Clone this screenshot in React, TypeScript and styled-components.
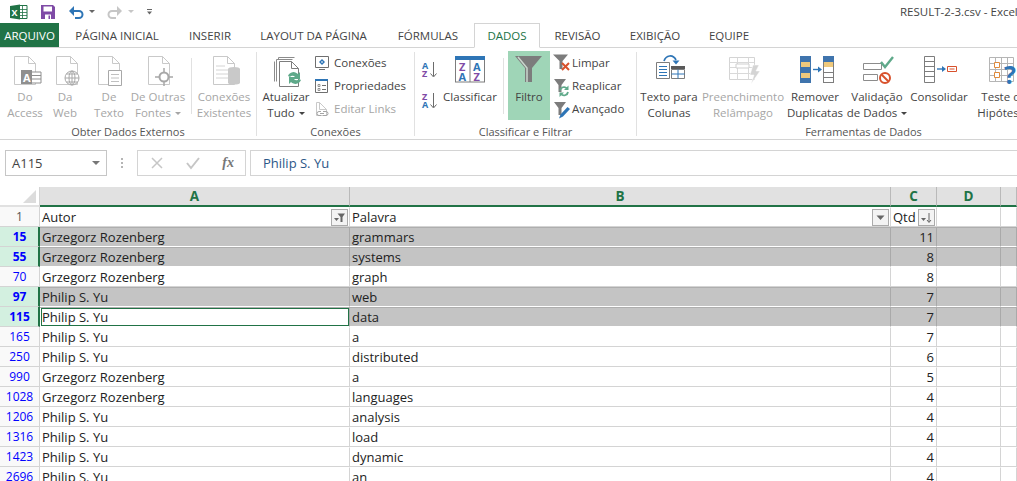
import { ReactNode } from "react";
import styled, { createGlobalStyle } from "styled-components";

const GlobalStyle = createGlobalStyle`
  html, body {
    margin: 0;
    padding: 0;
    background: #fff;
  }
  body {
    font-family: "Open Sans", "Noto Sans", sans-serif;
    color: #444;
  }
`;

const docPath = (x: number, y: number, w: number, h: number) =>
  `M${x + 0.5} ${y + 0.5}h${w - 7}l7 7v${h - 7}h-${w}zM${x + w - 6.5} ${y + 0.5}v7h7`;

const IconSvg = styled.svg`
  overflow: visible;
`;

const Svg = ({ w, h, children }: { w: number; h: number; children: ReactNode }) => (
  <IconSvg width={w} height={h} viewBox={`0 0 ${w} ${h}`} fill="none">
    {children}
  </IconSvg>
);

const AccessIcon = () => (
  <Svg w={40} h={38}>
    <path d={docPath(9, 5, 21, 28)} stroke="#c9c9c9" fill="#fff" />
    <rect x="16" y="19" width="11" height="14" fill="#8f8f8f" />
    <text x="18" y="31" fontSize="11" fontWeight="700" fill="#fff" fontFamily="Open Sans">A</text>
    <path d="M27 21h9v11h-9" fill="#fff" stroke="#8f8f8f" />
    <path d="M27 24.5h9M27 28h9" stroke="#8f8f8f" />
  </Svg>
);

const WebIcon = () => (
  <Svg w={40} h={38}>
    <path d={docPath(11, 5, 21, 28)} stroke="#c9c9c9" fill="#fff" />
    <circle cx="27" cy="27" r="7" fill="#fff" stroke="#a8a8a8" />
    <path d="M20 27h14M27 20v14M21.5 23h11M21.5 31h11" stroke="#a8a8a8" />
    <ellipse cx="27" cy="27" rx="3" ry="7" stroke="#a8a8a8" />
  </Svg>
);

const TextIcon = () => (
  <Svg w={48} h={38}>
    <path d={docPath(13, 5, 21, 28)} stroke="#c9c9c9" fill="#fff" />
    <path d="M23.5 19.5h13v15h-13z" fill="#fff" stroke="#a8a8a8" />
    <path d="M26 23.5h8M26 27h8M26 30.5h8" stroke="#c0c0c0" />
  </Svg>
);

const OtherIcon = () => (
  <Svg w={50} h={38}>
    <path d={docPath(15, 5, 21, 28)} stroke="#c9c9c9" fill="#fff" />
    <circle cx="31" cy="26" r="4.5" fill="#fff" stroke="#a8a8a8" strokeWidth="2" />
    <path d="M31 17v5M31 30v5M22 26h5M35 26h5" stroke="#a8a8a8" strokeWidth="1.5" />
  </Svg>
);

const ExistingIcon = () => (
  <Svg w={62} h={38}>
    <path d={docPath(20, 5, 21, 28)} stroke="#c9c9c9" fill="#fff" />
    <path d="M23 15h9M23 19h14M23 23h14M23 27h14" stroke="#d4d4d4" />
    <ellipse cx="41" cy="18" rx="6" ry="2" fill="#c9c9c9" />
    <path d="M35 18v14c1 2 11 2 12 0V18z" fill="#c9c9c9" />
  </Svg>
);

const RefreshIcon = () => (
  <Svg w={46} h={38}>
    <path d="M15.5 6.5h16M13.5 8.5h16M11.5 10.5v20M13.5 8.5v22M15.500 6.5v2" stroke="#8c8c8c" />
    <path d={docPath(16, 10, 19, 25)} stroke="#7d7d7d" fill="#fff" />
    <path d="M25 25a6 6 0 0 1 10-2l2-2v7h-7l2-2a3 3 0 0 0-5 0z" fill="#5fa98a" />
    <path d="M38 29a6 6 0 0 1-10 2l-2 2v-7h7l-2 2a3 3 0 0 0 5 0z" fill="#5fa98a" />
  </Svg>
);

const ConnIcon = () => (
  <Svg w={16} h={16}>
    <path d="M1.5 1.5h13v11h-13z" stroke="#6f6f6f" fill="#fff" />
    <path d="M5 14.5h6" stroke="#6f6f6f" />
    <path d="M8 4l3 3-3 3-3-3z" fill="#2e75b6" />
    <path d="M8 6l1 1-1 1-1-1z" fill="#fff" />
  </Svg>
);

const PropsIcon = () => (
  <Svg w={16} h={16}>
    <path d="M1.5 1.5h12v13h-12z" stroke="#6f6f6f" fill="#fff" />
    <path d="M1 1h13v2H1z" fill="#2e75b6" />
    <path d="M4 6.5h2v2H4zM4 10.5h2v2H4z" stroke="#6f6f6f" strokeWidth=".7" />
    <path d="M8 7.5h4M8 11.5h4" stroke="#6f6f6f" />
  </Svg>
);

const LinksIcon = () => (
  <Svg w={16} h={16}>
    <path d={docPath(2, 1, 10, 13)} stroke="#c9c9c9" fill="#fff" />
    <path d="M6 12.5h4M9 10.5h3a2 2 0 0 1 0 4H9M7 10.5H5a2 2 0 0 0 0 4h2" stroke="#a5a5a5" />
  </Svg>
);

const SortIcon = ({ top, bottom }: { top: string; bottom: string }) => (
  <Svg w={18} h={18}>
    <text x="0" y="8" fontSize="9" fontWeight="700" fill={top === "A" ? "#2e75b6" : "#7f4ba6"} fontFamily="Open Sans">{top}</text>
    <text x="0" y="16" fontSize="9" fontWeight="700" fill={bottom === "A" ? "#2e75b6" : "#7f4ba6"} fontFamily="Open Sans">{bottom}</text>
    <path d="M11.5 1v14M8.500 12.500l3 3.500 3-3.500" stroke="#6b6b6b" />
  </Svg>
);

const SortDialogIcon = () => (
  <Svg w={60} h={38}>
    <rect x="15.500" y="6" width="29" height="25" fill="#fff" stroke="#7d7d7d" />
    <rect x="15" y="5" width="30" height="4" fill="#2e75b6" />
    <path d="M30 9v22" stroke="#7d7d7d" />
    <text x="19" y="19.500" fontSize="11" fontWeight="700" fill="#7f4ba6" fontFamily="Open Sans">Z</text>
    <text x="18.500" y="30" fontSize="11" fontWeight="700" fill="#2e75b6" fontFamily="Open Sans">A</text>
    <text x="33" y="19.500" fontSize="11" fontWeight="700" fill="#2e75b6" fontFamily="Open Sans">A</text>
    <text x="33.500" y="30" fontSize="11" fontWeight="700" fill="#7f4ba6" fontFamily="Open Sans">Z</text>
  </Svg>
);

const FunnelIcon = () => (
  <Svg w={42} h={38}>
    <path d="M7 5h27L24 17v14h-7V17z" fill="#7c7c7c" />
    <path d="M10 6l9 11v14" stroke="#c9d6cd" strokeWidth="1.500" />
  </Svg>
);

const MiniFunnel = ({ small, children }: { small?: boolean; children: ReactNode }) => (
  <Svg w={18} h={20}>
    <path d={small ? "M1 3h12L8.500 9v7h-3V9z" : "M0 1.500h15L9.500 8v8h-3V8z"} fill="#7c7c7c" />
    {children}
  </Svg>
);

const TextColumnsIcon = () => (
  <Svg w={64} h={38}>
    <path d="M19.500 11.500h13v16h-13z" fill="#fff" stroke="#7d7d7d" />
    <path d="M22 15.500h8M22 18.500h8M22 21.500h8M22 24.500h8" stroke="#2e75b6" />
    <path d="M34.500 18.500h13v9h-13z" fill="#fff" stroke="#7d7d7d" />
    <path d="M34 15h14v3H34z" fill="#595959" />
    <path d="M41 18.500v9M34.500 23h13" stroke="#2e75b6" />
    <path d="M27 10c2-6 9-7 12-1" stroke="#2e75b6" strokeWidth="1.700" />
    <path d="M35.500 9.500h7l-3.500 4z" fill="#2e75b6" />
  </Svg>
);

const FlashFillIcon = () => (
  <Svg w={84} h={38}>
    <path d="M28.500 6.500h25v22h-25z" fill="#fff" stroke="#d4d4d4" />
    <path d="M28.500 11.500h25M28.500 16.500h25M28.500 22.500h25M36.500 6.500v22M47.500 6.500v22" stroke="#d9d9d9" />
    <path d="M35 13h13v4H35z" fill="#fff" stroke="#cfcfcf" />
    <path d="M52 14h6l-3 6h4l-9 13 3-9h-4z" fill="#d4d4d4" stroke="#fff" strokeWidth=".5" />
  </Svg>
);

const RemoveDupIcon = () => (
  <Svg w={60} h={38}>
    <rect x="15" y="5" width="11" height="27" fill="#3f74ad" />
    <rect x="16" y="11" width="9" height="5" fill="#efc97c" />
    <rect x="16" y="22" width="9" height="5" fill="#efc97c" />
    <path d="M28 18.500h7" stroke="#2e75b6" strokeWidth="1.400" />
    <path d="M33 15.500l4 3-4 3z" fill="#2e75b6" />
    <rect x="38.500" y="5.500" width="10" height="26" fill="#fff" stroke="#7d7d7d" />
    <rect x="38" y="5" width="11" height="6" fill="#3f74ad" />
    <rect x="39" y="11" width="9" height="5" fill="#efc97c" />
    <path d="M38.500 21.500h10M38.500 26.500h10" stroke="#7d7d7d" />
  </Svg>
);

const ValidationIcon = () => (
  <Svg w={64} h={38}>
    <path d="M18.500 12.500h18v6h-18zM18.500 23.500h14v6h-14z" fill="#fff" stroke="#8c8c8c" />
    <path d="M36 11l4 5 8-10" stroke="#5fa98a" strokeWidth="2.400" />
    <circle cx="40" cy="27" r="5" fill="#fff" stroke="#d8512c" strokeWidth="2" />
    <path d="M36.500 23.500l7 7" stroke="#d8512c" strokeWidth="2" />
  </Svg>
);

const ConsolidateIcon = () => (
  <Svg w={60} h={38}>
    <path d="M15.500 5.500h10v26h-10zM15.500 10.500h10M15.500 15.500h10M15.500 20.500h10M15.500 25.500h10" fill="#fff" stroke="#7d7d7d" />
    <path d="M28 18h7" stroke="#2e75b6" strokeWidth="1.400" />
    <path d="M33 15l4 3-4 3z" fill="#2e75b6" />
    <path d="M38.500 15.500h9v5h-9z" fill="#fff" stroke="#d8512c" />
    <path d="M40.500 18h5" stroke="#d8512c" />
  </Svg>
);

const WhatIfIcon = () => (
  <Svg w={70} h={38}>
    <path d="M20.500 6.500h24v24h-24zM20.500 12.500h24M20.500 18.500h24M20.500 24.500h24M26.500 6.500v24M32.500 6.500v24M38.500 6.500v24" fill="#fff" stroke="#b5b5b5" />
    <path d="M25.500 11.500h5v5h-5zM25.500 21.500h5v5h-5z" fill="#fff" stroke="#e08a3c" />
    <text x="35" y="33" fontSize="25" fontWeight="700" fill="#2e75b6" fontFamily="Open Sans">?</text>
  </Svg>
);

const Page = styled.div`
  width: 1017px;
  height: 481px;
  overflow: hidden;
  background: #fff;
`;

const TitleBar = styled.div`
  height: 23px;
  display: flex;
  align-items: center;
`;

const QuickAccess = styled.div`
  display: flex;
  align-items: center;
  gap: 12px;
  padding-left: 10px;
`;

const QuickCaret = styled.span<{ $muted?: boolean }>`
  width: 0;
  height: 0;
  margin-left: -7px;
  border-left: 3px solid transparent;
  border-right: 3px solid transparent;
  border-top: 3px solid ${(p) => (p.$muted ? "#c6c6c6" : "#666")};
`;

const WindowTitle = styled.div`
  margin-left: auto;
  width: 117px;
  overflow: hidden;
  white-space: nowrap;
  font-size: 11.5px;
  color: #444;
`;

const TabBar = styled.div`
  height: 24px;
  display: flex;
  border-bottom: 1px solid #d4d4d4;
`;

const Tab = styled.div<{ $w: number; $active?: boolean; $file?: boolean }>`
  width: ${(p) => p.$w}px;
  height: ${(p) => (p.$active ? 25 : 24)}px;
  box-sizing: border-box;
  display: flex;
  align-items: center;
  justify-content: center;
  white-space: nowrap;
  font-size: 11.5px;
  color: ${(p) => (p.$file ? "#fff" : p.$active ? "#217346" : "#444")};
  background: ${(p) => (p.$file ? "#217346" : "#fff")};
  border: ${(p) => (p.$active ? "1px solid #d4d4d4" : "none")};
  border-bottom: ${(p) => (p.$active ? "1px solid #fff" : "none")};
`;

const Ribbon = styled.div`
  height: 92px;
  display: flex;
  box-sizing: border-box;
  overflow: hidden;
  border-bottom: 1px solid #d4d4d4;
`;

const Group = styled.div<{ $w: number }>`
  width: ${(p) => p.$w}px;
  flex-shrink: 0;
  margin: 4px 0 3px;
  display: flex;
  flex-direction: column;
  box-sizing: border-box;
  border-right: 1px solid #e1e1e1;
`;

const GroupBody = styled.div`
  display: flex;
  height: 69px;
  margin-top: -1px;
`;

const GroupCaption = styled.div`
  text-align: center;
  font-size: 11px;
  line-height: 16px;
  margin-top: 4px;
  color: #555;
  white-space: nowrap;
`;

const RibbonBtn = styled.div<{ $w: number; $off?: boolean; $on?: boolean }>`
  width: ${(p) => p.$w}px;
  flex-shrink: 0;
  display: flex;
  flex-direction: column;
  align-items: center;
  background: ${(p) => (p.$on ? "#9fd5b7" : "transparent")};
  color: ${(p) => (p.$off ? "#a6a6a6" : "#444")};
`;

const Spacer = styled.div<{ $w: number }>`
  width: ${(p) => p.$w}px;
  flex-shrink: 0;
`;

const IconSlot = styled.div`
  height: 38px;
  svg {
    display: block;
  }
`;

const BtnLabel = styled.div`
  font-size: 11.5px;
  line-height: 16px;
  text-align: center;
  white-space: nowrap;
`;

const Caret = styled.span`
  display: inline-block;
  margin-left: 4px;
  vertical-align: 2px;
  width: 0;
  height: 0;
  border-left: 3px solid transparent;
  border-right: 3px solid transparent;
  border-top: 3px solid currentColor;
`;

const VSep = styled.div`
  width: 1px;
  height: 56px;
  margin: 7px 0 0;
  flex-shrink: 0;
  background: #e1e1e1;
`;

const SmallCol = styled.div<{ $left: number; $w: number }>`
  margin-left: ${(p) => p.$left}px;
  width: ${(p) => p.$w}px;
  flex-shrink: 0;
  display: flex;
  flex-direction: column;
`;

const SmallBtn = styled.div<{ $off?: boolean; $gap?: number }>`
  height: 23px;
  display: flex;
  align-items: center;
  gap: ${(p) => p.$gap ?? 3}px;
  font-size: 11.5px;
  white-space: nowrap;
  color: ${(p) => (p.$off ? "#a6a6a6" : "#444")};
  svg {
    display: block;
    flex-shrink: 0;
  }
`;

const SortCol = styled.div`
  width: 18px;
  margin-left: 7px;
  flex-shrink: 0;
  padding-top: 10px;
  display: flex;
  flex-direction: column;
  gap: 13px;
  svg {
    display: block;
  }
`;

const FormulaBar = styled.div`
  height: 26px;
  margin: 10px 0 11px;
  display: flex;
  align-items: stretch;
`;

const NameBox = styled.div`
  width: 102px;
  margin-left: 5px;
  box-sizing: border-box;
  padding: 0 6px;
  border: 1px solid #c6c6c6;
  display: flex;
  align-items: center;
  justify-content: space-between;
  font-size: 13px;
  color: #444;
`;

const NameArrow = styled.span`
  width: 0;
  height: 0;
  border-left: 4px solid transparent;
  border-right: 4px solid transparent;
  border-top: 4px solid #777;
`;

const Dots = styled.div`
  width: 30px;
  display: flex;
  flex-direction: column;
  align-items: center;
  justify-content: center;
  gap: 2px;
  span {
    width: 2px;
    height: 2px;
    background: #b5b5b5;
  }
`;

const FxBox = styled.div`
  width: 109px;
  box-sizing: border-box;
  border: 1px solid #d4d4d4;
  display: flex;
  align-items: center;
  justify-content: space-between;
  padding: 0 11px 0 12px;
`;

const FxLabel = styled.span`
  font-family: "Liberation Serif", serif;
  font-style: italic;
  font-weight: 700;
  font-size: 14px;
  color: #777;
`;

const FormulaInput = styled.div`
  flex: 1;
  margin-left: 4px;
  box-sizing: border-box;
  padding-left: 12px;
  border: 1px solid #d4d4d4;
  border-right: none;
  display: flex;
  align-items: center;
  font-size: 13px;
  color: #2b5788;
`;

const Sheet = styled.div`
  display: grid;
  grid-template-columns: 40px 310px 541px 46px 64px 16px;
  grid-auto-rows: 20px;
  font-size: 13px;
  color: #222;
`;

const HeadRow = styled.div`
  display: contents;
`;

const Corner = styled.div`
  height: 20px;
  box-sizing: border-box;
  background: #fff;
  border-right: 1px solid #d4d4d4;
  border-bottom: 2px solid #e1e1e1;
  display: flex;
  justify-content: flex-end;
  align-items: flex-start;
  padding: 3px 3px 0 0;
  &::after {
    content: "";
    width: 0;
    height: 0;
    border-left: 13px solid transparent;
    border-bottom: 13px solid #dcdcdc;
  }
`;

const ColHead = styled.div`
  height: 20px;
  box-sizing: border-box;
  background: #e1e1e1;
  border-right: 1px solid #b9b9b9;
  border-bottom: 2px solid #217346;
  display: flex;
  align-items: center;
  justify-content: center;
  font-size: 13.5px;
  font-weight: 700;
  color: #217346;
`;

const RowHead = styled.div<{ $sel?: boolean; $plain?: boolean }>`
  box-sizing: border-box;
  display: flex;
  align-items: center;
  justify-content: center;
  padding-left: ${(p) => (p.$sel ? 1 : 0)}px;
  font-size: 12px;
  font-weight: ${(p) => (p.$sel ? 700 : 400)};
  color: ${(p) => (p.$plain ? "#555" : "#0000ff")};
  background: ${(p) => (p.$sel ? "#d3f0e0" : "#f9f9f9")};
  border-bottom: 1px solid #d4d4d4;
  border-right: ${(p) => (p.$sel ? "2px solid #217346" : "1px solid #d4d4d4")};
`;

const Cell = styled.div<{ $sel?: boolean; $num?: boolean; $active?: boolean }>`
  box-sizing: border-box;
  display: flex;
  align-items: center;
  justify-content: ${(p) => (p.$num ? "flex-end" : "space-between")};
  padding: 0 2px;
  white-space: nowrap;
  overflow: hidden;
  background: ${(p) => (p.$sel && !p.$active ? "#c4c4c4" : "#fff")};
  border-top: 1px solid ${(p) => (p.$sel ? "#aeaeae" : "transparent")};
  border-bottom: 1px solid ${(p) => (p.$sel ? "#fff" : "#d4d4d4")};
  border-right: 1px solid ${(p) => (p.$sel ? "#a9a9a9" : "#d4d4d4")};
  outline: ${(p) => (p.$active ? "1px solid #217346" : "none")};
  outline-offset: -2px;
`;

const FilterBtn = styled.span`
  width: 17px;
  height: 17px;
  margin-right: -1px;
  box-sizing: border-box;
  flex-shrink: 0;
  background: #f3f3f3;
  border: 1px solid #ababab;
  display: flex;
  align-items: center;
  justify-content: center;
  svg {
    display: block;
  }
`;

const rows: [number, string, string, number, boolean][] = [
  [15, "Grzegorz Rozenberg", "grammars", 11, true],
  [55, "Grzegorz Rozenberg", "systems", 8, true],
  [70, "Grzegorz Rozenberg", "graph", 8, false],
  [97, "Philip S. Yu", "web", 7, true],
  [115, "Philip S. Yu", "data", 7, true],
  [165, "Philip S. Yu", "a", 7, false],
  [250, "Philip S. Yu", "distributed", 6, false],
  [990, "Grzegorz Rozenberg", "a", 5, false],
  [1028, "Grzegorz Rozenberg", "languages", 4, false],
  [1206, "Philip S. Yu", "analysis", 4, false],
  [1316, "Philip S. Yu", "load", 4, false],
  [1423, "Philip S. Yu", "dynamic", 4, false],
  [2696, "Philip S. Yu", "an", 4, false],
];

const tabs: [string, number][] = [
  ["PÁGINA INICIAL", 116],
  ["INSERIR", 70],
  ["LAYOUT DA PÁGINA", 137],
  ["FÓRMULAS", 92],
];

const App = () => {
  return (
    <Page>
      <GlobalStyle />
      <TitleBar>
        <QuickAccess>
          <Svg w={18} h={16}>
            <path d="M8 1.500h9v13H8z" fill="#fff" stroke="#217346" />
            <path d="M12.500 1.500v13M8 5.500h9M8 8.500h9M8 11.500h9" stroke="#217346" strokeWidth=".8" />
            <path d="M0 2l10-1.500v15L0 14z" fill="#217346" />
            <text x="1.500" y="11.500" fontSize="9" fontWeight="700" fill="#fff" fontFamily="Open Sans">X</text>
          </Svg>
          <Svg w={16} h={16}>
            <path d="M1 1h12l2 2v12H1z" fill="#7f4ba6" />
            <path d="M3.500 2.500h8.500v5H3.500z" fill="#fff" />
            <path d="M5 10.500h6V15H5z" fill="#fff" />
            <path d="M8.500 11.500h1.500V15H8.500z" fill="#7f4ba6" />
          </Svg>
          <Svg w={16} h={16}>
            <path d="M4 7h7a3.500 3.500 0 0 1 0 7H7" stroke="#2e75b6" strokeWidth="2" />
            <path d="M6 2L1 7l5 5z" fill="#2e75b6" />
          </Svg>
          <QuickCaret />
          <Svg w={16} h={16}>
            <path d="M12 7H5a3.500 3.500 0 0 0 0 7h4" stroke="#c6c6c6" strokeWidth="2" />
            <path d="M10 2l5 5-5 5z" fill="#c6c6c6" />
          </Svg>
          <QuickCaret $muted />
          <Svg w={8} h={8}>
            <path d="M1 1.500h5" stroke="#666" />
            <path d="M1 3.500h5l-2.500 3z" fill="#666" />
          </Svg>
        </QuickAccess>
        <WindowTitle>RESULT-2-3.csv - Excel</WindowTitle>
      </TitleBar>

      <TabBar>
        <Tab $w={59} $file>
          ARQUIVO
        </Tab>
        {tabs.map(([name, w]) => (
          <Tab key={name} $w={w}>
            {name}
          </Tab>
        ))}
        <Tab $w={66} $active>
          DADOS
        </Tab>
        <Tab $w={75}>REVISÃO</Tab>
        <Tab $w={80}>EXIBIÇÃO</Tab>
        <Tab $w={68}>EQUIPE</Tab>
      </TabBar>

      <Ribbon>
        <Group $w={257}>
          <GroupBody>
            <Spacer $w={5} />
            <RibbonBtn $w={40} $off>
              <IconSlot><AccessIcon /></IconSlot>
              <BtnLabel>Do<br />Access</BtnLabel>
            </RibbonBtn>
            <RibbonBtn $w={40} $off>
              <IconSlot><WebIcon /></IconSlot>
              <BtnLabel>Da<br />Web</BtnLabel>
            </RibbonBtn>
            <RibbonBtn $w={48} $off>
              <IconSlot><TextIcon /></IconSlot>
              <BtnLabel>De<br />Texto</BtnLabel>
            </RibbonBtn>
            <RibbonBtn $w={50} $off>
              <IconSlot><OtherIcon /></IconSlot>
              <BtnLabel>De Outras<br />Fontes<Caret /></BtnLabel>
            </RibbonBtn>
            <Spacer $w={8} />
            <VSep />
            <RibbonBtn $w={64} $off>
              <IconSlot><ExistingIcon /></IconSlot>
              <BtnLabel>Conexões<br />Existentes</BtnLabel>
            </RibbonBtn>
          </GroupBody>
          <GroupCaption>Obter Dados Externos</GroupCaption>
        </Group>

        <Group $w={158}>
          <GroupBody>
            <Spacer $w={6} />
            <RibbonBtn $w={46}>
              <IconSlot><RefreshIcon /></IconSlot>
              <BtnLabel>Atualizar<br />Tudo<Caret /></BtnLabel>
            </RibbonBtn>
            <SmallCol $left={5} $w={98}>
              <SmallBtn $gap={4}><ConnIcon />Conexões</SmallBtn>
              <SmallBtn $gap={4}><PropsIcon />Propriedades</SmallBtn>
              <SmallBtn $gap={4} $off><LinksIcon />Editar Links</SmallBtn>
            </SmallCol>
          </GroupBody>
          <GroupCaption>Conexões</GroupCaption>
        </Group>

        <Group $w={222}>
          <GroupBody>
            <SortCol>
              <SortIcon top="A" bottom="Z" />
              <SortIcon top="Z" bottom="A" />
            </SortCol>
            <RibbonBtn $w={60}>
              <IconSlot><SortDialogIcon /></IconSlot>
              <BtnLabel>Classificar</BtnLabel>
            </RibbonBtn>
            <Spacer $w={3} />
            <VSep />
            <Spacer $w={4} />
            <RibbonBtn $w={42} $on>
              <IconSlot><FunnelIcon /></IconSlot>
              <BtnLabel>Filtro</BtnLabel>
            </RibbonBtn>
            <SmallCol $left={3} $w={84}>
              <SmallBtn $gap={1}>
                <MiniFunnel><path d="M9 10l7 7M16 10l-7 7" stroke="#d8512c" strokeWidth="2" /></MiniFunnel>
                Limpar
              </SmallBtn>
              <SmallBtn $gap={1}>
                <MiniFunnel small>
                  <path d="M7 14.500a4 4 0 0 1 7-2" stroke="#5fa98a" strokeWidth="1.800" />
                  <path d="M15.500 9.500V14H11z" fill="#5fa98a" />
                  <path d="M15 16a4 4 0 0 1-7 2" stroke="#5fa98a" strokeWidth="1.800" />
                  <path d="M6.500 21V16.500H11z" fill="#5fa98a" />
                </MiniFunnel>
                Reaplicar
              </SmallBtn>
              <SmallBtn $gap={1}>
                <MiniFunnel small><path d="M6 19.500l1.500-4 7-7.500 2.500 2-7 7.500z" fill="#2e75b6" /></MiniFunnel>
                Avançado
              </SmallBtn>
            </SmallCol>
          </GroupBody>
          <GroupCaption>Classificar e Filtrar</GroupCaption>
        </Group>

        <Group $w={454}>
          <GroupBody>
            <RibbonBtn $w={64}>
              <IconSlot><TextColumnsIcon /></IconSlot>
              <BtnLabel>Texto para<br />Colunas</BtnLabel>
            </RibbonBtn>
            <RibbonBtn $w={84} $off>
              <IconSlot><FlashFillIcon /></IconSlot>
              <BtnLabel>Preenchimento<br />Relâmpago</BtnLabel>
            </RibbonBtn>
            <RibbonBtn $w={60}>
              <IconSlot><RemoveDupIcon /></IconSlot>
              <BtnLabel>Remover<br />Duplicatas</BtnLabel>
            </RibbonBtn>
            <RibbonBtn $w={64}>
              <IconSlot><ValidationIcon /></IconSlot>
              <BtnLabel>Validação<br />de Dados<Caret /></BtnLabel>
            </RibbonBtn>
            <RibbonBtn $w={60}>
              <IconSlot><ConsolidateIcon /></IconSlot>
              <BtnLabel>Consolidar</BtnLabel>
            </RibbonBtn>
            <RibbonBtn $w={70}>
              <IconSlot><WhatIfIcon /></IconSlot>
              <BtnLabel>Teste de<br />Hipóteses</BtnLabel>
            </RibbonBtn>
          </GroupBody>
          <GroupCaption>Ferramentas de Dados</GroupCaption>
        </Group>
      </Ribbon>

      <FormulaBar>
        <NameBox>
          A115
          <NameArrow />
        </NameBox>
        <Dots>
          <span />
          <span />
          <span />
        </Dots>
        <FxBox>
          <Svg w={14} h={14}>
            <path d="M2 2l10 10M12 2L2 12" stroke="#c6c6c6" strokeWidth="1.500" />
          </Svg>
          <Svg w={14} h={14}>
            <path d="M1 7l4 5 8-10" stroke="#c6c6c6" strokeWidth="2" />
          </Svg>
          <FxLabel>fx</FxLabel>
        </FxBox>
        <FormulaInput>Philip S. Yu</FormulaInput>
      </FormulaBar>

      <Sheet>
        <HeadRow>
          <Corner />
          <ColHead>A</ColHead>
          <ColHead>B</ColHead>
          <ColHead>C</ColHead>
          <ColHead>D</ColHead>
          <ColHead />
        </HeadRow>
        <RowHead $plain>1</RowHead>
        <Cell>
          Autor
          <FilterBtn>
            <Svg w={13} h={13}>
              <path d="M1 7h5L3.500 10z" fill="#666" />
              <path d="M4.500 2.500h7.500L9.500 6v5H7.500V6z" fill="#666" />
            </Svg>
          </FilterBtn>
        </Cell>
        <Cell>
          Palavra
          <FilterBtn>
            <Svg w={13} h={13}>
              <path d="M2.500 4.500h8L6.500 9z" fill="#666" />
            </Svg>
          </FilterBtn>
        </Cell>
        <Cell>
          Qtd
          <FilterBtn>
            <Svg w={13} h={13}>
              <path d="M1 7h5L3.500 10z" fill="#666" />
              <path d="M9 2v9M7 9l2 2.500L11 9" stroke="#666" />
            </Svg>
          </FilterBtn>
        </Cell>
        <Cell />
        <Cell />
        {rows.map(([num, autor, palavra, qtd, sel]) => (
          <HeadRow key={num}>
            <RowHead $sel={sel}>{num}</RowHead>
            <Cell $sel={sel} $active={num === 115}>{autor}</Cell>
            <Cell $sel={sel}>{palavra}</Cell>
            <Cell $sel={sel} $num>{qtd}</Cell>
            <Cell $sel={sel} />
            <Cell $sel={sel} />
          </HeadRow>
        ))}
      </Sheet>
    </Page>
  );
};

export default App;
